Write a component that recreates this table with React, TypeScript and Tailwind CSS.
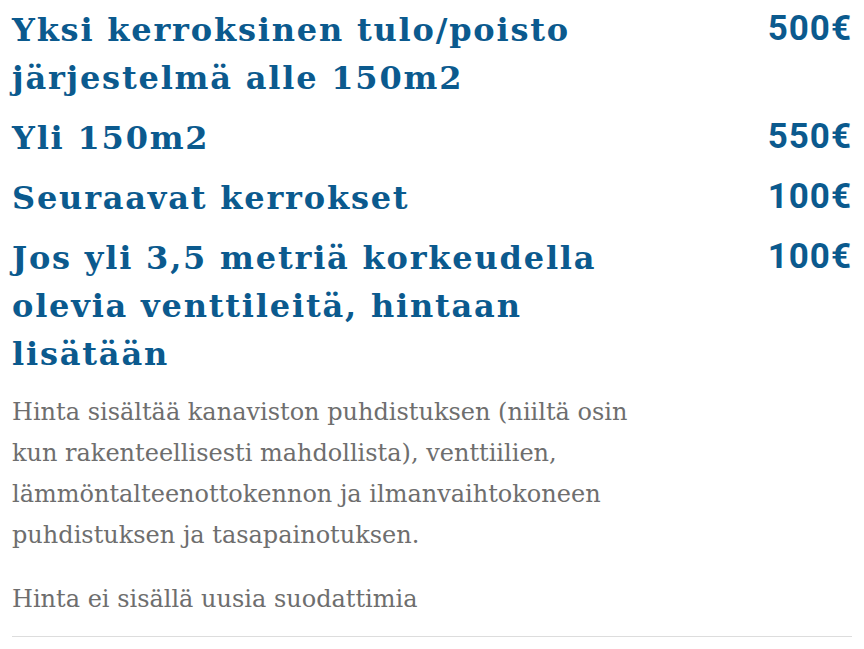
import React from "react";

const rows: { title: string; price: string }[] = [
  { title: "Yksi kerroksinen tulo/poisto järjestelmä alle 150m2", price: "500€" },
  { title: "Yli 150m2", price: "550€" },
  { title: "Seuraavat kerrokset", price: "100€" },
  { title: "Jos yli 3,5 metriä korkeudella olevia venttileitä, hintaan lisätään", price: "100€" },
];

export default function App() {
  return (
    <div className="w-[864px] h-[649px] bg-white px-3 pt-[6px] overflow-hidden">
      <div className="flex flex-col gap-3">
        {rows.map((r) => (
          <div key={r.title} className="flex justify-between items-start">
            <h3
              className="w-[610px] text-[32px] leading-[48px] font-bold tracking-[1.8px] text-[#0b5a8e]"
              style={{ fontFamily: '"DejaVu Serif", serif' }}
            >
              {r.title}
            </h3>
            <span
              className="text-[35px] leading-[46px] font-bold tracking-[1px] text-[#0b5a8e]"
              style={{ fontFamily: 'Roboto, "Liberation Sans", sans-serif' }}
            >
              {r.price}
            </span>
          </div>
        ))}
      </div>
      <div
        className="mt-[14px] text-[24px] leading-[41px] font-light text-[#6e6e6e]"
        style={{ fontFamily: '"DejaVu Serif", serif' }}
      >
        <p className="w-[640px]">
          Hinta sisältää kanaviston puhdistuksen (niiltä osin kun rakenteellisesti mahdollista), venttiilien,
          lämmöntalteenottokennon ja ilmanvaihtokoneen puhdistuksen ja tasapainotuksen.
        </p>
        <p className="mt-[23px]">Hinta ei sisällä uusia suodattimia</p>
      </div>
      <div className="mt-4 border-t border-[#dddddd]" />
    </div>
  );
}
